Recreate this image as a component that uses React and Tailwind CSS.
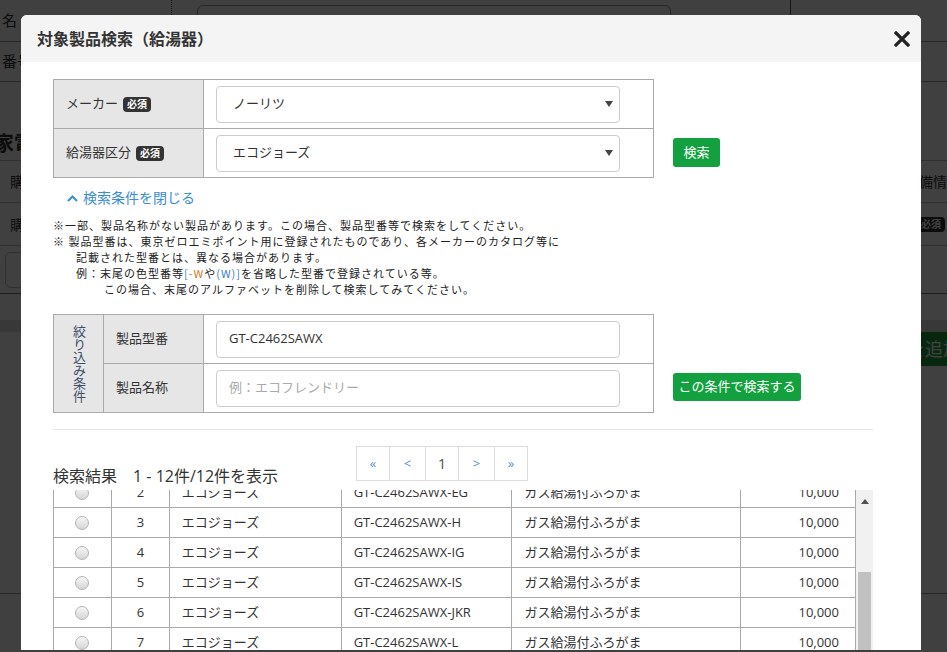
import React from "react";

const FONT = "font-['Open_Sans','Noto_Sans_CJK_JP',sans-serif]";

function Badge() {
  return (
    <span className="ml-[5px] inline-flex h-[15px] items-center rounded-[4px] bg-[#333] px-[4px] text-[10px] font-bold leading-none text-white">
      必須
    </span>
  );
}

function Select({ value }) {
  return (
    <div className="flex h-[37px] w-[404px] items-center justify-between rounded-[4px] border border-[#ccc] bg-white pl-[16px] pr-[6px] text-[13px] text-[#333]">
      <span>{value}</span>
      <svg width="8" height="6" viewBox="0 0 8 6"><path d="M0 0h8L4 6z" fill="#444" /></svg>
    </div>
  );
}

function Input({ value, placeholder }) {
  return (
    <div className="flex h-[37px] w-[404px] items-center rounded-[4px] border border-[#ccc] bg-white px-[12px] text-[13px]">
      {value ? <span className="text-[#333]">{value}</span> : <span className="text-[#aaa]">{placeholder}</span>}
    </div>
  );
}

function Radio() {
  return <span className="inline-block h-[14px] w-[14px] rounded-full border border-[#b5b5b5] bg-gradient-to-b from-[#f6f6f6] to-[#d6d6d6]" />;
}

const rows = [
  ["1", "GT-C2462SAWX-BL"],
  ["2", "GT-C2462SAWX-EG"],
  ["3", "GT-C2462SAWX-H"],
  ["4", "GT-C2462SAWX-IG"],
  ["5", "GT-C2462SAWX-IS"],
  ["6", "GT-C2462SAWX-JKR"],
  ["7", "GT-C2462SAWX-L"],
  ["8", "GT-C2462SAWX-M"],
];

function Background() {
  return (
    <div className="flex h-[652px] w-[947px] flex-col bg-white text-[14px] text-[#333]">
      <div className="flex h-[42px] border-b border-[#999]">
        <div className="flex w-[172px] items-center border-r border-dotted border-[#555] pl-[2px] text-[15px]">名</div>
        <div className="ml-[25px] mt-[5px] h-[60px] w-[474px] rounded-[6px] border border-[#999]" />
        <div className="ml-[119px] border-l border-[#555]" />
      </div>
      <div className="flex h-[40px] items-center border-b border-[#999] pl-[2px] text-[15px]">番号</div>
      <div className="h-[45px]" />
      <div className="-ml-[6px] flex h-[33px] items-center text-[20px] font-bold">家電</div>
      <div className="flex h-[43px] items-center justify-between border-y border-[#bbb] pl-[10px]">
        <span>購入</span>
        <span className="-mr-[14px]">設備情報</span>
      </div>
      <div className="flex h-[43px] items-center justify-between border-b border-[#bbb] pl-[10px]">
        <span>購入</span>
        <span className="mr-[2px] rounded-[4px] bg-[#333] px-[4px] text-[10px] font-bold text-white">必須</span>
      </div>
      <div className="flex h-[48px] items-center justify-between border-b border-[#777] px-[5px]">
        <div className="flex h-[36px] w-[100px] items-center justify-end rounded-[6px] border border-[#bbb] pr-[2px]">Z</div>
      </div>
      <div className="h-[26px]" />
      <div className="h-[12px] bg-[#ddd]" />
      <div className="flex h-[34px] justify-end">
        <div className="flex w-[60px] items-center overflow-hidden whitespace-nowrap rounded-l-[4px] bg-[#1f9e3f] pl-[20px] text-[18px] text-white">を追加</div>
      </div>
      <div className="h-[228px] border-b border-[#999]" />
    </div>
  );
}

export default function App() {
  return (
    <div className={`relative h-[652px] w-[947px] overflow-hidden ${FONT}`}>
      <Background />
      <div className="absolute inset-0 bg-black/75" />
      <div className="absolute left-[21px] top-[15px] flex h-[635px] w-[900px] flex-col overflow-hidden rounded-t-[6px] bg-white">
        <div className="flex h-[47px] shrink-0 items-center justify-between bg-[#f4f4f4] pl-[16px] pr-[11px]">
          <span className="text-[16px] font-bold text-[#333]">対象製品検索（給湯器）</span>
          <svg width="16" height="16" viewBox="0 0 16 16">
            <path d="M2 2L14 14M14 2L2 14" stroke="#222" strokeWidth="3.2" strokeLinecap="square" />
          </svg>
        </div>

        <div className="flex flex-1 flex-col pl-[32px] pr-[48px] pt-[17px] text-[#333]">
          {/* condition table 1 */}
          <div className="flex items-start">
            <div className="w-[601px] border border-[#aaa] text-[13px]">
              <div className="flex h-[49px] border-b border-[#aaa]">
                <div className="flex w-[150px] items-center border-r border-[#aaa] bg-[#e6e6e6] pl-[12px]">
                  メーカー<Badge />
                </div>
                <div className="flex items-center pl-[12px]">
                  <Select value="ノーリツ" />
                </div>
              </div>
              <div className="flex h-[48px]">
                <div className="flex w-[150px] items-center border-r border-[#aaa] bg-[#e6e6e6] pl-[12px]">
                  給湯器区分<Badge />
                </div>
                <div className="flex items-center pl-[12px]">
                  <Select value="エコジョーズ" />
                </div>
              </div>
            </div>
            <button className="ml-[19px] mt-[59px] flex h-[29px] w-[47px] items-center justify-center rounded-[3px] bg-[#13a03e] text-[13px] text-white">
              検索
            </button>
          </div>

          <div className="mt-[10px] flex items-center pl-[14px] text-[14px] leading-[20px] text-[#3b8dd6]">
            <svg width="11" height="7" viewBox="0 0 11 7" className="mr-[5px]">
              <path d="M1 6L5.5 1.5L10 6" stroke="#3b8dd6" strokeWidth="2" fill="none" />
            </svg>
            検索条件を閉じる
          </div>

          <div className="mt-[9px] text-[11px] leading-[16px] tracking-[1px] text-[#222] font-['Noto_Sans_CJK_JP',sans-serif]">
            <div>※一部、製品名称がない製品があります。この場合、製品型番等で検索をしてください。</div>
            <div>※ 製品型番は、東京ゼロエミポイント用に登録されたものであり、各メーカーのカタログ等に</div>
            <div className="pl-[23px]">記載された型番とは、異なる場合があります。</div>
            <div className="pl-[23px]">
              例：末尾の色型番等<span className="text-[#3b7fd0]">[</span>
              <span className="text-[#d07a2a]">-W</span>や<span className="text-[#3b7fd0]">(W)]</span>を省略した型番で登録されている等。
            </div>
            <div className="pl-[51px]">この場合、末尾のアルファベットを削除して検索してみてください。</div>
          </div>

          {/* condition table 2 */}
          <div className="mt-[17px] flex items-start">
            <div className="flex w-[601px] border border-[#aaa] text-[13px]">
              <div className="flex w-[50px] items-center justify-center border-r border-[#aaa] bg-[#e6e6e6]">
                <span className="text-[13px] leading-[13px] text-[#3d4f66] [writing-mode:vertical-rl]">絞り込み条件</span>
              </div>
              <div className="flex flex-1 flex-col">
                <div className="flex h-[49px] border-b border-[#aaa]">
                  <div className="flex w-[100px] items-center border-r border-[#aaa] bg-[#e6e6e6] pl-[12px]">製品型番</div>
                  <div className="flex items-center pl-[12px]">
                    <Input value="GT-C2462SAWX" />
                  </div>
                </div>
                <div className="flex h-[48px]">
                  <div className="flex w-[100px] items-center border-r border-[#aaa] bg-[#e6e6e6] pl-[12px]">製品名称</div>
                  <div className="flex items-center pl-[12px]">
                    <Input placeholder="例：エコフレンドリー" />
                  </div>
                </div>
              </div>
            </div>
            <button className="ml-[19px] mt-[59px] flex h-[28px] w-[128px] items-center justify-center rounded-[3px] bg-[#13a03e] text-[13px] text-white">
              この条件で検索する
            </button>
          </div>

          <div className="mt-[16px] w-[820px] border-t border-[#e5e5e5]" />

          <div className="mt-[16px] flex items-start">
            <div className="mt-[19px] w-[303px] text-[16px] leading-[22px] text-[#333]">
              検索結果<span className="ml-[16px]">1 - 12件/12件を表示</span>
            </div>
            <div className="flex h-[35px] border border-[#ddd] text-[13px]">
              <div className="flex w-[33px] items-center justify-center border-r border-[#ddd] text-[#5b8fd0]">«</div>
              <div className="flex w-[36px] items-center justify-center border-r border-[#ddd] text-[#5b8fd0]">&lt;</div>
              <div className="flex w-[33px] items-center justify-center border-r border-[#ddd] text-[15px] text-[#555]">1</div>
              <div className="flex w-[36px] items-center justify-center border-r border-[#ddd] text-[#5b8fd0]">&gt;</div>
              <div className="flex w-[32px] items-center justify-center text-[#5b8fd0]">»</div>
            </div>
          </div>

          <div className="mt-[3px] flex h-[160px] overflow-hidden">
            <div className="w-[803px] border-l border-[#aaa] text-[13px] text-[#333]">
              <div className="-mt-[42px]">
                {rows.map(([n, model]) => (
                  <div key={n} className="flex h-[30px] border-b border-[#aaa]">
                    <div className="flex w-[58px] items-center justify-center border-r border-[#aaa]"><Radio /></div>
                    <div className="flex w-[58px] items-center justify-center border-r border-[#aaa]">{n}</div>
                    <div className="flex w-[172px] items-center border-r border-[#aaa] pl-[12px]">エコジョーズ</div>
                    <div className="flex w-[171px] items-center border-r border-[#aaa] pl-[12px]">{model}</div>
                    <div className="flex w-[229px] items-center border-r border-[#aaa] pl-[12px]">ガス給湯付ふろがま</div>
                    <div className="flex w-[115px] items-center justify-end border-r border-[#aaa] pr-[16px]">10,000</div>
                  </div>
                ))}
              </div>
            </div>
            <div className="relative flex w-[17px] flex-col bg-[#f1f1f1]">
              <div className="flex h-[22px] items-center justify-center">
                <svg width="8" height="5" viewBox="0 0 8 5"><path d="M0 5L4 0L8 5z" fill="#505050" /></svg>
              </div>
              <div className="mt-[60px] mx-[2px] flex-1 bg-[#c1c1c1]" />
            </div>
          </div>
        </div>
      </div>
    </div>
  );
}
